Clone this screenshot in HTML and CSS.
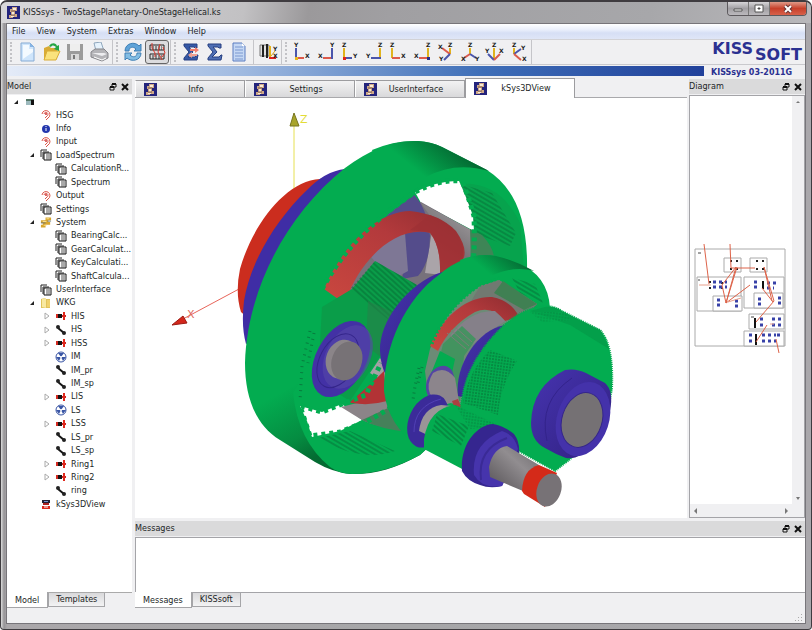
FILE: index.html
```html
<!DOCTYPE html>
<html lang="en">
<head>
<meta charset="utf-8">
<title>KISSsys - TwoStagePlanetary-OneStageHelical.ks</title>
<link rel="stylesheet" href="styles.css">
</head>
<body>
<svg class="defs" aria-hidden="true">
  <symbol id="app" viewBox="0 0 13 13"><rect width="13" height="13" fill="#24247c"/><path d="M5 1h5v4H8v3h2v3H6v1H2V9h2V6H3V3h2z" fill="#cfa987"/><path d="M6 2h3v2H6zM5 6h2v3H5zM4 10h3v1H4z" fill="#f8ebd8"/><path d="M4 5h4M4 9h4" stroke="#7a5a4c"/></symbol>
  <symbol id="copy" viewBox="0 0 12 12"><path d="M1 8V1h6M3 10V3h6" fill="none" stroke="#222"/><path d="M4 4h7v7H4z" fill="#fff" stroke="#111"/><path d="M6 6h4M6 8h4M6 10h4" stroke="#555"/></symbol>
  <symbol id="ear" viewBox="0 0 12 12"><g fill="none" stroke="#dc5548"><path d="M2 5a4 4 0 1 1 6 4L6 11"/><path d="M4 5a2 2 0 1 1 3 2L5 9"/></g><circle cx="6" cy="5" r="1" fill="#c33"/></symbol>
  <symbol id="info" viewBox="0 0 12 12"><circle cx="6" cy="6" r="4" fill="#2337ad"/><path d="M6 5v3M6 3v1" stroke="#fff"/></symbol>
  <symbol id="shaft" viewBox="0 0 12 12"><path d="M1 6h10" stroke="#c22" stroke-width="2"/><path d="M1 4h2v4H1z" fill="#d52a20"/><path d="M3 4h4v4H3z" fill="#111"/><path d="M8 2h2v8H8z" fill="#e0291c"/></symbol>
  <symbol id="link" viewBox="0 0 12 12"><path d="M3 4l6 5" stroke="#151515" stroke-width="2"/><circle cx="3" cy="3" r="2" fill="#222"/><circle cx="9" cy="9" r="2" fill="#222"/></symbol>
  <symbol id="wheel" viewBox="0 0 12 12"><circle cx="6" cy="6" r="5" fill="#fff" stroke="#3955a5"/><path d="M6 6L3 2h6zM6 6l5 0-3 4zM6 6L1 6l3 4z" fill="#3955a5"/><circle cx="6" cy="6" r="1" fill="#fff"/></symbol>
  <symbol id="gears" viewBox="0 0 13 12"><path d="M6 1h6v3H9v2h2v3H6v3H1V9h2V7H1V4h5z" fill="#d7a52e"/><path d="M7 2h3v1H7zM3 5h4v1H3zM4 9h3v1H4z" fill="#f7df8b"/><path d="M1 7h5M8 5h4" stroke="#6a777c"/></symbol>
  <symbol id="folder" viewBox="0 0 12 12"><path d="M1 2l4-1 1 1h4v9H1z" fill="#e0c35c"/><path d="M2 2l4-1v10l-4-1z" fill="#f8e9a2"/><path d="M7 3h3v7H7z" fill="#f0d16c"/></symbol>
  <symbol id="view" viewBox="0 0 12 12"><path d="M2 2h8v3H2z" fill="#223"/><path d="M4 3h4v1H4z" fill="#7790d0"/><path d="M3 5h6v2H3z" fill="#a22"/><path d="M2 8h8v3H2z" fill="#db2a1e"/><path d="M4 9h4" stroke="#fff"/></symbol>
  <symbol id="root" viewBox="0 0 12 12"><path d="M2 3h6v6H2z" fill="#9db9bd"/><path d="M2 3h8v2H2z" fill="#576"/><path d="M7 4h3v5H7z" fill="#111"/></symbol>
  <symbol id="open" viewBox="0 0 8 8"><path d="M6 2v4H2z" fill="#222"/></symbol>
  <symbol id="closed" viewBox="0 0 8 8"><path d="M2 1l4 3-4 3z" fill="#fff" stroke="#aaa"/></symbol>
  <symbol id="float" viewBox="0 0 8 8"><path d="M3 1h4v3H3zM1 4h4v3H1z" fill="#e6e6e6" stroke="#111"/><path d="M3 1h4M1 4h4" stroke="#111" stroke-width="2"/></symbol>
  <symbol id="close" viewBox="0 0 8 8"><path d="M1 1l6 6M7 1L1 7" stroke="#111" stroke-width="2"/></symbol>
</svg>

<div class="window">
  <header class="titlebar">
    <svg class="i13"><use href="#app"/></svg>
    <h1>KISSsys - TwoStagePlanetary-OneStageHelical.ks</h1>
    <div class="winbtns">
      <button aria-label="Minimize"><svg viewBox="0 0 12 10"><path d="M2 5h8v2H2z" fill="#fff" stroke="#555"/></svg></button>
      <button aria-label="Maximize"><svg viewBox="0 0 12 10"><path d="M2 1h8v7H2z" fill="#fff" stroke="#555"/><path d="M5 4h2v1H5z" stroke="#555"/></svg></button>
      <button class="x" aria-label="Close"><svg viewBox="0 0 12 10"><path d="M3 2l6 6M9 2L3 8" stroke="#633" stroke-width="4"/><path d="M3 2l6 6M9 2L3 8" stroke="#fff" stroke-width="2"/></svg></button>
    </div>
  </header>

  <div class="client">
    <nav class="menu">
      <button>File</button><button>View</button><button>System</button><button>Extras</button><button>Window</button><button>Help</button>
    </nav>

    <div class="top">
      <div class="toolbar">
        <div class="group">
          <button aria-label="New"><svg viewBox="0 0 20 20"><path d="M4 1h9l4 4v14H4z" fill="#cfe5fb" stroke="#86abd4"/><path d="M6 3h6v4h4v3L6 17z" fill="#f4faff"/><path d="M13 1v4h4z" fill="#86b4e4"/></svg></button>
          <button aria-label="Open"><svg viewBox="0 0 20 20"><path d="M3 6l5-2 2 2h6v11H3z" fill="#d9ac35"/><path d="M3 18L6 9h13l-4 9z" fill="#fae27c" stroke="#d9ac35"/><path d="M8 4c3-4 7-3 8 0l2-1v6l-5-2 2-2c-2-2-4-2-5 0z" fill="#27a645"/></svg></button>
          <button aria-label="Save"><svg viewBox="0 0 20 20"><path d="M2 2h16v16H2z" fill="#9b9b9b"/><path d="M5 2h10v7H5z" fill="#eee"/><path d="M6 12h8v6H6z" fill="#d8d8d8"/><path d="M8 13h2v4H8z" fill="#777"/></svg></button>
          <button aria-label="Print"><svg viewBox="0 0 20 20"><path d="M5 1l7-1 3 9H7z" fill="#e6f2fc" stroke="#8fa7bd"/><path d="M2 10l4-3h9l4 4v5l-6 3-11-4z" fill="#b4b4b8" stroke="#85858a"/><path d="M3 11h12l3 1-5 2z" fill="#ededf0"/><path d="M5 15l8 3 4-2" stroke="#fff" fill="none"/></svg></button>
        </div>
        <div class="group">
          <button aria-label="Refresh"><svg viewBox="0 0 20 20"><path d="M2 9c0-8 10-10 14-5l2-2v7h-7l2-2c-3-3-7-2-7 2z" fill="#5fa3d8" stroke="#3f7fb4"/><path d="M18 11c0 8-10 9-14 5l-2 2v-7h7l-2 2c3 3 7 2 7-2z" fill="#82bde4" stroke="#3f7fb4"/></svg></button>
          <button class="on" aria-label="Diagram" aria-pressed="true"><svg viewBox="0 0 20 20"><path d="M3 3h14v5H3zM3 12h14v5H3z" fill="#ddd" stroke="#222"/><path d="M5 5h10M5 7h10M5 14h10M5 16h10" stroke="#333" stroke-dasharray="2 1"/><path d="M5 1v5l3 5v4M13 2l-2 8 4 8M16 5l2 6-3 4" stroke="#d8392e" fill="none"/></svg></button>
        </div>
        <div class="group">
          <button aria-label="Calculate"><svg viewBox="0 0 20 20"><path d="M3 2h13v4h-2l-1-1H8l4 5-5 5h7l2-2h1l-1 5H3v-2l5-6-5-6z" fill="#3558a6" stroke="#263f80"/><path d="M9 7h5V5l4 3-4 3V9H9z" fill="#f07c6c"/><path d="M16 12h-5v-2l-4 3 4 3v-2h5z" fill="#f0a090"/></svg></button>
          <button aria-label="Sum"><svg viewBox="0 0 20 20"><path d="M3 2h13v4h-2l-1-1H8l4 5-5 5h7l2-2h1l-1 5H3v-2l5-6-5-6z" fill="#4f6fb4" stroke="#263f80"/></svg></button>
          <button aria-label="Report"><svg viewBox="0 0 20 20"><path d="M4 1h9l3 3v15H4z" fill="#c5d8f4" stroke="#5a7cc0"/><path d="M6 5h8M6 8h8M6 11h8M6 14h8M6 17h8" stroke="#7a98d0"/><path d="M13 1v3h3z" fill="#fff"/></svg></button>
          <i class="sep"></i>
          <button aria-label="3D view"><svg viewBox="0 0 20 20"><path d="M2 3h9v11H2z" fill="#e2e2e2" stroke="#777"/><path d="M5 3v12M9 2v14" stroke="#222" stroke-width="2"/><path d="M12 4v11" stroke="#e4b21c" stroke-width="2"/><path d="M11 16h7" stroke="#d22" stroke-width="2"/><path d="M13 14l4-5" stroke="#d9a81f"/><text x="15" y="9">Y</text><text x="15" y="16">X</text></svg></button>
        </div>
        <div class="group axes">
          <button aria-label="View XY"><svg viewBox="0 0 20 20"><path d="M4 6v11" class="b"/><path d="M4 16h8" class="r"/><path d="M3 15h3v3H3z" class="fy"/><text x="2" y="5">Y</text><text x="13" y="16">X</text></svg></button>
          <button aria-label="View YX"><svg viewBox="0 0 20 20"><path d="M16 6v11" class="b"/><path d="M7 16h8" class="r"/><text x="14" y="5">Y</text><text x="2" y="16">X</text></svg></button>
          <button aria-label="View ZY"><svg viewBox="0 0 20 20"><path d="M4 6v10" class="y"/><path d="M4 16h8" class="b"/><path d="M3 15h3v3H3z" class="fr"/><text x="2" y="5">Z</text><text x="13" y="16">Y</text></svg></button>
          <button aria-label="View YZ"><svg viewBox="0 0 20 20"><path d="M16 6v10" class="y"/><path d="M7 16h10" class="b"/><text x="14" y="5">Z</text><text x="2" y="16">Y</text></svg></button>
          <button aria-label="View ZX"><svg viewBox="0 0 20 20"><path d="M4 6v10" class="y"/><path d="M4 16h8" class="r"/><text x="2" y="5">Z</text><text x="13" y="16">X</text></svg></button>
          <button aria-label="View XZ"><svg viewBox="0 0 20 20"><path d="M16 6v10" class="y"/><path d="M7 16h8" class="r"/><path d="M15 15h3v3h-3z" class="fb"/><text x="14" y="5">Z</text><text x="2" y="16">X</text></svg></button>
          <button aria-label="Isometric 1"><svg viewBox="0 0 20 20"><path d="M14 6v6" class="y"/><path d="M14 12L6 6" class="r"/><path d="M14 12l-6 6" class="b"/><text x="12" y="5">Z</text><text x="2" y="7">X</text><text x="3" y="19">Y</text></svg></button>
          <button aria-label="Isometric 2"><svg viewBox="0 0 20 20"><path d="M10 6v6" class="y"/><path d="M10 12l-6 4" class="r"/><path d="M10 12l6 4" class="b"/><text x="8" y="5">Z</text><text x="1" y="19">X</text><text x="15" y="19">Y</text></svg></button>
          <button aria-label="Isometric 3"><svg viewBox="0 0 20 20"><path d="M10 6v12" class="y"/><path d="M10 18l-6-6" class="b"/><path d="M10 18l6-6" class="r"/><text x="8" y="5">Z</text><text x="1" y="11">Y</text><text x="15" y="11">X</text></svg></button>
          <button aria-label="Isometric 4"><svg viewBox="0 0 20 20"><path d="M6 6v6" class="y"/><path d="M6 12l7-5" class="b"/><path d="M6 12l7 6" class="r"/><text x="4" y="5">Z</text><text x="13" y="8">Y</text><text x="14" y="19">X</text></svg></button>
        </div>
      </div>
      <div class="logo"><b>KISS</b><b class="low">SOFT</b></div>
    </div>
    <div class="strip"><i></i><span>KISSsys 03-2011G</span></div>

    <main>
      <aside class="left">
        <div class="dock"><h2>Model</h2><button aria-label="Float"><svg><use href="#float"/></svg></button><button aria-label="Close"><svg><use href="#close"/></svg></button></div>
        <div class="treebox">
        <ul class="tree">
          <li class="l0"><svg class="tw"><use href="#open"/></svg><svg><use href="#root"/></svg></li>
          <li class="l1"><i class="tw"></i><svg><use href="#ear"/></svg><span>HSG</span></li>
          <li class="l1"><i class="tw"></i><svg><use href="#info"/></svg><span>Info</span></li>
          <li class="l1"><i class="tw"></i><svg><use href="#ear"/></svg><span>Input</span></li>
          <li class="l1"><svg class="tw"><use href="#open"/></svg><svg><use href="#copy"/></svg><span>LoadSpectrum</span></li>
          <li class="l2"><i class="tw"></i><svg><use href="#copy"/></svg><span>CalculationR...</span></li>
          <li class="l2"><i class="tw"></i><svg><use href="#copy"/></svg><span>Spectrum</span></li>
          <li class="l1"><i class="tw"></i><svg><use href="#ear"/></svg><span>Output</span></li>
          <li class="l1"><i class="tw"></i><svg><use href="#copy"/></svg><span>Settings</span></li>
          <li class="l1"><svg class="tw"><use href="#open"/></svg><svg><use href="#gears"/></svg><span>System</span></li>
          <li class="l2"><i class="tw"></i><svg><use href="#copy"/></svg><span>BearingCalc...</span></li>
          <li class="l2"><i class="tw"></i><svg><use href="#copy"/></svg><span>GearCalculat...</span></li>
          <li class="l2"><i class="tw"></i><svg><use href="#copy"/></svg><span>KeyCalculati...</span></li>
          <li class="l2"><i class="tw"></i><svg><use href="#copy"/></svg><span>ShaftCalcula...</span></li>
          <li class="l1"><i class="tw"></i><svg><use href="#copy"/></svg><span>UserInterface</span></li>
          <li class="l1"><svg class="tw"><use href="#open"/></svg><svg><use href="#folder"/></svg><span>WKG</span></li>
          <li class="l2"><svg class="tw"><use href="#closed"/></svg><svg><use href="#shaft"/></svg><span>HIS</span></li>
          <li class="l2"><svg class="tw"><use href="#closed"/></svg><svg><use href="#link"/></svg><span>HS</span></li>
          <li class="l2"><svg class="tw"><use href="#closed"/></svg><svg><use href="#shaft"/></svg><span>HSS</span></li>
          <li class="l2"><i class="tw"></i><svg><use href="#wheel"/></svg><span>IM</span></li>
          <li class="l2"><i class="tw"></i><svg><use href="#link"/></svg><span>IM_pr</span></li>
          <li class="l2"><i class="tw"></i><svg><use href="#link"/></svg><span>IM_sp</span></li>
          <li class="l2"><svg class="tw"><use href="#closed"/></svg><svg><use href="#shaft"/></svg><span>LIS</span></li>
          <li class="l2"><i class="tw"></i><svg><use href="#wheel"/></svg><span>LS</span></li>
          <li class="l2"><svg class="tw"><use href="#closed"/></svg><svg><use href="#shaft"/></svg><span>LSS</span></li>
          <li class="l2"><i class="tw"></i><svg><use href="#link"/></svg><span>LS_pr</span></li>
          <li class="l2"><i class="tw"></i><svg><use href="#link"/></svg><span>LS_sp</span></li>
          <li class="l2"><svg class="tw"><use href="#closed"/></svg><svg><use href="#shaft"/></svg><span>Ring1</span></li>
          <li class="l2"><svg class="tw"><use href="#closed"/></svg><svg><use href="#shaft"/></svg><span>Ring2</span></li>
          <li class="l2"><i class="tw"></i><svg><use href="#link"/></svg><span>ring</span></li>
          <li class="l1"><i class="tw"></i><svg><use href="#view"/></svg><span>kSys3DView</span></li>
        </ul>
        </div>
        <div class="btabs"><button class="active">Model</button><button>Templates</button></div>
      </aside>

      <div class="right">
        <div class="work">
          <section class="center">
            <div class="tabs">
              <button><svg class="i13"><use href="#app"/></svg><span>Info</span></button>
              <button><svg class="i13"><use href="#app"/></svg><span>Settings</span></button>
              <button><svg class="i13"><use href="#app"/></svg><span>UserInterface</span></button>
              <button class="active"><svg class="i13"><use href="#app"/></svg><span>kSys3DView</span></button>
            </div>
            <div class="canvas">
            <svg viewBox="135 97 552 420" role="img" aria-label="Two-stage planetary gearbox">
              <defs>
                <linearGradient id="ringG" gradientUnits="userSpaceOnUse" x1="300" y1="465" x2="265" y2="400"><stop offset="0" stop-color="#046b32"/><stop offset=".35" stop-color="#058c41"/><stop offset="1" stop-color="#03ac50"/></linearGradient>
                <linearGradient id="topG" gradientUnits="userSpaceOnUse" x1="430" y1="180" x2="462" y2="140"><stop offset="0" stop-color="#03ac50"/><stop offset="1" stop-color="#045b2c"/></linearGradient>
                <linearGradient id="top2" gradientUnits="userSpaceOnUse" x1="498" y1="280" x2="520" y2="254"><stop offset="0" stop-color="#03ac50"/><stop offset="1" stop-color="#056531"/></linearGradient>
                <linearGradient id="redG" x1="0" y1="1" x2="1" y2="0"><stop offset="0" stop-color="#c9473f"/><stop offset=".6" stop-color="#b33a3c"/><stop offset="1" stop-color="#8e2c30"/></linearGradient>
                <linearGradient id="blueG" x1="0" y1="0" x2="1" y2="1"><stop offset="0" stop-color="#4634b0"/><stop offset="1" stop-color="#30207f"/></linearGradient>
                <linearGradient id="greyG" x1="1" y1="0" x2="0" y2="1"><stop offset="0" stop-color="#6b686b"/><stop offset=".4" stop-color="#918d90"/><stop offset="1" stop-color="#545054"/></linearGradient>
                <pattern id="mesh" width="3" height="3" patternUnits="userSpaceOnUse" patternTransform="rotate(8)"><rect width="3" height="3" fill="#03ac50"/><path d="M0 1h2" stroke="#066a34"/></pattern>
                <pattern id="ribs" width="20" height="4" patternUnits="userSpaceOnUse" patternTransform="rotate(30)"><path d="M0 1h20" stroke="#067038"/></pattern>
                <pattern id="ribs2" width="20" height="4" patternUnits="userSpaceOnUse" patternTransform="rotate(42)"><path d="M0 1h20" stroke="#056b34"/></pattern>
                <clipPath id="hole"><path d="M324 288C345 250 370 225 417 192Q440 181 459 182Q464 195 470 215Q472 230 470 262L500 300 384 375Q392 420 362 419L340 406 350 300z"/></clipPath>
              </defs>
              <!-- axes -->
              <path d="M294 122v66" stroke="#e6e052" fill="none"/><path d="M294 112l5 13h-9z" fill="#a8a42a" stroke="#77751f"/>
              <text x="300" y="122" class="ax" fill="#e3dc38">Z</text>
              <path d="M183 318l56-30" stroke="#e8655a" fill="none"/><path d="M172 324l11-9 4 7z" fill="#d3271c" stroke="#9c1a12"/>
              <text x="187" y="317" class="ax" fill="#e06a5f">X</text>
              <!-- input discs behind the first ring -->
              <path d="M320 178C285 180 252 225 240 268Q235 292 241 311L262 330 345 168z" fill="#cb2d1e"/>
              <path d="M345 168Q325 170 306 190C275 220 250 262 244 300Q241 325 246 343L270 330 360 180z" fill="#3f2da5"/>
              <!-- first ring -->
              <path d="M345 167C370 148 395 139 418 140Q432 141 442 146L487 169C514 186 528 218 527 268L500 380 420 454C395 468 372 474 350 473Q332 471 315 461L280 439C255 424 245 395 245 362C247 290 285 215 345 167z" fill="url(#ringG)"/>
              <path d="M372 149Q395 139 418 140Q432 141 442 146L489 170Q455 160 426 176L390 200z" fill="url(#topG)"/>
              <path d="M293 392Q298 440 330 466Q340 473 352 473Q385 473 420 454L500 380 400 350 320 340z" fill="#03ac50"/>
              <path d="M460 183Q500 180 520 222L524 270 474 256 470 215z" fill="#07a34d"/>
              <path d="M460 183L492 192 516 232 510 245 472 232z" fill="url(#ribs)"/>
              <!-- openings -->
              <path d="M415 191Q440 179 459 180Q466 195 473 215L474 230 421 202z" fill="#fff"/>
              <path d="M300 405L322 411 342 403 362 419 340 430 312 436 307 420z" fill="#fff"/>
              <!-- interior -->
              <g clip-path="url(#hole)">
                <path d="M324 288L384 210 421 201 471 229 495 260 440 280 384 300 345 310z" fill="#77717b"/>
                <path d="M421 202L471 229 495 260 465 258 430 215z" fill="url(#greyG)"/>
                <path d="M432 230L446 236 442 274 425 272z" fill="#aaa4a9"/>
                <path d="M372 224L412 192Q427 205 430 235Q430 262 418 275L402 278Q410 240 396 215z" fill="#544c8b"/>
                <path d="M365 248L405 232 408 270 390 280z" fill="#7e7795"/>
              </g>
              <path d="M470 228L482 234Q493 246 494 256L471 258z" fill="#3e8556"/>
              <path d="M324 288C342 246 375 211 410 210Q440 213 456 230Q467 246 464 256L458 272 440 272Q441 246 430 232C395 224 360 260 347 297L338 298z" fill="url(#redG)"/>
              <path d="M430 214Q455 224 462 244Q465 258 458 272L440 272Q441 246 430 231L410 229z" fill="#9d3034" opacity=".7"/>
              <!-- planet gear -->
              <path d="M352 288L375 260 417 284 398 315 382 352 350 400 318 380 322 306z" fill="#0a9d49"/>
              <path d="M375 260L417 284 390 320 350 288z" fill="url(#ribs2)"/>
              <path d="M368 300L395 312 381 356 366 345z" fill="#27804a" opacity=".6"/>
              <path d="M370 372L380 357 388 368 386 382z" fill="#a5a0a3"/>
              <path d="M341 406L365 400 392 384 405 426Q380 428 362 419z" fill="#8b8488"/>
              <path d="M349 402Q370 384 384 370L387 400Q370 405 352 402z" fill="#b23335"/>
              <path d="M362 419L388 407 408 431Q380 428 362 419z" fill="#46805a"/>
              <!-- tooth edges -->
              <g fill="none" stroke="#03ac50" stroke-width="5" stroke-dasharray="4 4">
                <path d="M322 288C345 247 370 222 415 191Q440 178 460 180"/><path d="M463 182Q468 195 474 215Q475 245 473 262"/>
                <path d="M301 405L322 411 342 403 366 394 381 362"/><path d="M301 408L310 435 340 431 370 419 390 407"/>
              </g>
              <path d="M318 437L350 430 395 450Q360 462 318 437z" fill="url(#ribs)"/>
              <path d="M310 330L302 365 300 400M314 332l-6 30" stroke="#0a6a37" stroke-dasharray="1 5" stroke-width="3" fill="none" opacity=".7"/>
              <!-- planet pin -->
              <g transform="rotate(28 341 358)"><ellipse cx="341" cy="358" rx="25" ry="41" fill="#4331a5"/><ellipse cx="346" cy="353" rx="22" ry="34" fill="#5747a8" opacity=".6"/><ellipse cx="339" cy="361" rx="18" ry="29" fill="none" stroke="#34258a"/></g>
              <g transform="rotate(20 344 359)"><ellipse cx="342" cy="359" rx="16" ry="20" fill="#8b8589"/><ellipse cx="347" cy="359" rx="15" ry="20" fill="#777276"/></g>
              <!-- second stage bearing and ring -->
              <path d="M442 271C408 282 379 320 380 350Q381 366 386 374L412 330 450 275z" fill="url(#blueG)"/>
              <path d="M440 273Q462 254 489 254Q505 255 518 262Q548 274 550 307L530 380 450 450 420 447Q388 425 384 390C384 345 405 298 440 273z" fill="#03ac50"/>
              <path d="M460 259Q478 252 496 255Q514 259 534 270Q515 265 495 273L470 286z" fill="url(#top2)"/>
              <path d="M512 277L535 283 543 302 520 292z" fill="url(#ribs)"/>
              <path d="M430 348Q445 308 480 285L499 279 537 303 500 330 470 365 460 405 428 395 425 370z" fill="#6c8b76"/>
              <path d="M480 285L499 279 537 303 525 316 497 303 470 302z" fill="#717971"/>
              <path d="M503 280L537 303 524 309 494 292z" fill="#408053"/>
              <path d="M430 345C445 311 470 295 492 296Q512 300 519 316L505 320Q492 304 475 311Q450 325 438 350z" fill="url(#redG)"/>
              <path d="M450 335Q470 309 495 310L505 320 470 345z" fill="#858089"/>
              <path d="M443 343L462 325 476 338 464 355 460 400 430 396z" fill="#3c945c" opacity=".85"/>
              <path d="M447 332L466 348M451 329L469 345M455 326L472 341" stroke="#797e77"/>
              <path d="M440 350L455 358 452 372 430 375z" fill="#03ac50"/>
              <path d="M432 343Q445 308 480 284L500 277" fill="none" stroke="#03ac50" stroke-width="3" stroke-dasharray="2 2"/>
              <path d="M419 367l-4 18-2 14M422 366l-4 16" stroke="#0a6a37" stroke-dasharray="1 4" stroke-width="3" fill="none" opacity=".7"/>
              <ellipse cx="440" cy="382" rx="13" ry="18" fill="#5544a4" transform="rotate(25 440 382)"/><path d="M433 372Q445 364 455 377L459 400 447 403 430 393Q426 383 433 372z" fill="#8c858c"/><path d="M452 400l6-2 4 10-8-3z" fill="#a94040"/>
              <!-- large helical gear -->
              <path d="M505 324C478 328 454 365 458 395L475 400 510 335z" fill="url(#blueG)"/>
              <path d="M461 408Q463 365 500 328Q522 306 545 305Q555 305 562 310L600 329Q614 343 612 388L604 430 568 460 555 470 500 440z" fill="#03ac50" stroke="#03ac50" stroke-width="2" stroke-dasharray="1 1"/>
              <path d="M545 306Q556 305 562 310L601 329 609 348 570 324 530 310z" fill="#048b40" opacity=".4"/>
              <path d="M490 349Q503 354 517 360Q500 385 498 414L463 402Q468 370 490 349z" fill="url(#mesh)"/>
              <path d="M530 311h34l8 8-30 2z" fill="url(#mesh)" opacity=".4"/>
              <path d="M531 422Q532 385 565 369Q576 367 586 372L605 382Q614 390 610 410C604 440 582 460 566 457Q555 453 545 447Q531 440 531 422z" fill="url(#blueG)"/>
              <ellipse cx="583" cy="418" rx="26" ry="38" fill="#4432aa" transform="rotate(18 583 418)"/><path d="M547 440Q538 400 572 377" stroke="#33238b" fill="none"/>
              <ellipse cx="582" cy="419" rx="20" ry="28" fill="#757174" stroke="#35268a" transform="rotate(18 582 419)"/>
              <!-- pinion shaft -->
              <ellipse cx="428" cy="420" rx="19" ry="28" fill="#3b2b99" transform="rotate(25 428 420)"/><path d="M419 430Q422 407 441 404L452 405 436 438z" fill="#9a9597"/><path d="M414 431Q414 405 441 398" stroke="#5140b5" fill="none"/>
              <path d="M424 438Q429 407 455 404L505 427 485 480 424 448z" fill="#03ac50"/>
              <path d="M437 413L469 425 461 445 432 430z" fill="url(#ribs2)"/><path d="M455 404L500 425 470 428z" fill="url(#mesh)" opacity=".6"/>
              <path d="M462 470C460 443 477 424 493 423Q504 425 514 433Q520 441 519 452L502 485Q490 488 480 484Q467 480 462 470z" fill="#35268f"/>
              <path d="M474 474Q471 443 502 430Q515 434 518 448L502 485Q482 488 474 474z" fill="#4634ac"/><path d="M481 479Q477 448 507 437" stroke="#3a2a96" fill="none" stroke-width="2"/>
              <path d="M489 466Q493 447 507 445L539 464 523 490 490 476z" fill="url(#greyG)"/>
              <path d="M522 490Q523 468 539 464L557 472 545 506 524 493z" fill="#d42a19"/>
              <ellipse cx="549" cy="489" rx="12" ry="17" fill="#777276" transform="rotate(20 549 489)"/>
            </svg>
            </div>
          </section>
          <aside class="diagram">
            <div class="dock"><h2>Diagram</h2><button aria-label="Float"><svg><use href="#float"/></svg></button><button aria-label="Close"><svg><use href="#close"/></svg></button></div>
            <div class="scroll">
              <div class="paper">
                <svg viewBox="0 0 96 114" role="img" aria-label="Model diagram">
                  <g fill="#fff" stroke="#aaa"><path d="M2 6h90v97H2z"/><path d="M31 15h17v14H31zM57 15h17v14H57z"/><path d="M4 34h44v34H4zM51 34h40v31H51z"/><path d="M20 53h29v15H20zM61 50h29v15H61z"/><path d="M56 71h35v15H56zM51 88h40v15H51z"/></g>
                  <g stroke="#222" stroke-width="2" stroke-dasharray="2 4"><path d="M37 18h9M37 26h9M63 18h9M63 26h9M16 39h5M16 45h5M28 40h4M28 45h4"/></g>
                  <path d="M62 75v10M63 91v11M70 38v8" stroke="#111" stroke-width="2"/>
                  <g stroke="#3842a8" stroke-width="3" stroke-dasharray="3 3"><path d="M20 39h14M20 44h14M24 57h5M24 62h5M42 58h5M42 63h5M61 39h5M61 44h5M74 40h9M74 45h7M65 56h5M65 61h5M85 55h4M85 60h4M67 76h5M67 82h5M79 76h11M79 82h11M56 92h3M56 98h3M69 92h14M69 98h14M84 92h4"/></g>
                  <path d="M5 10h3M5 37h2M58 74h3" stroke="#444"/>
                  <path d="M11 1l5 40M37 1l1 24h24M43 24L29 42l4 18M43 24L33 60M44 24L33 60M33 60l24-18M71 24l8 34M71 24l10 34M69 45l11 14M81 58L63 79M74 82L63 99M83 96l3 14" fill="none" stroke="#dd6349"/>
                  <path d="M35 59l13-4M77 81l4 0M6 42l12 0" stroke="#e9a08c"/>
                </svg>
              </div>
              <div class="vbar"><svg viewBox="0 0 8 8"><path d="M2 5l2-2 2 2z"/></svg><svg viewBox="0 0 8 8"><path d="M2 3h4L4 6z"/></svg></div>
              <div class="hbar"><svg viewBox="0 0 8 8"><path d="M5 1v6L2 4z"/></svg><svg viewBox="0 0 8 8"><path d="M3 1v6l3-3z"/></svg></div>
            </div>
          </aside>
        </div>
        <section class="messages">
          <div class="dock"><h2>Messages</h2><button aria-label="Float"><svg><use href="#float"/></svg></button><button aria-label="Close"><svg><use href="#close"/></svg></button></div>
          <div class="log"></div>
          <div class="btabs"><button class="active">Messages</button><button>KISSsoft</button></div>
        </section>
      </div>
    </main>
    <footer><svg viewBox="0 0 8 8"><path d="M6 1h1v1H6zM3 4h1v1H3zM6 4h1v1H6zM0 7h1v1H0zM3 7h1v1H3zM6 7h1v1H6z" fill="#aaa"/></svg></footer>
  </div>
</div>
</body>
</html>
```

FILE: styles.css
```css
* { box-sizing: border-box; }
body {
  margin: 0;
  background: #fff;
  color: #221f26;
  font: 9px/13px "DejaVu Sans Condensed", "DejaVu Sans", sans-serif;
}
button {
  margin: 0;
  padding: 0;
  border: 0;
  background: none;
  color: inherit;
  font: inherit;
}
h1, h2 { margin: 0; font-size: 9px; font-weight: 400; }
svg { display: block; flex: none; }
.defs { position: absolute; width: 0; height: 0; }
.i13 { width: 13px; height: 13px; }

.window {
  display: flex;
  flex-direction: column;
  min-height: 100vh;
  padding: 0 5px 5px;
  border: 1px solid #3f3c40;
  border-top-width: 2px;
  border-radius: 7px 7px 4px 4px;
  background: linear-gradient(90deg, #ddd 0, #969497 3px, #aaa7aa 6px, #a6a6a8 50%, #a9a7ab);
}
.titlebar {
  display: flex;
  align-items: center;
  gap: 3px;
  height: 21px;
  margin: 0 -5px;
  padding-left: 6px;
  border-radius: 6px 6px 0 0;
  background: linear-gradient(100deg, #d9d8da 0, #c2c1c3 30%, #9b999b 38%, #a09fa2 48%, #a7a7aa 80%, #b9b8bb);
}
.titlebar h1 { flex: 1; }
.winbtns { display: flex; align-self: flex-start; margin-right: 4px; border: 1px solid #5c595d; border-top: 0; border-radius: 0 0 4px 4px; overflow: hidden; }
.winbtns button { width: 21px; height: 13px; border-right: 1px solid #777; background: linear-gradient(#d6d5d8, #a19fa3 50%, #bbb9bd); }
.winbtns .x { width: 36px; border: 0; background: linear-gradient(#e09a88, #c7402b 50%, #d8614a); }
.winbtns svg { width: 12px; height: 10px; margin: auto; }

.client { flex: 1; display: flex; flex-direction: column; border: 1px solid #77757a; background: #f0f0f2; }
.menu { display: flex; gap: 11px; height: 15px; padding-left: 5px; background: linear-gradient(#fff, #e9eefb 40%, #d6dff5 60%, #dfe6f7); }
.top { display: flex; justify-content: space-between; height: 26px; border-top: 1px solid #d2d2d6; border-bottom: 1px solid #c9c9cd; }
.toolbar { display: flex; }
.group { display: flex; align-items: center; padding: 0 1px 0 3px; border-right: 1px solid #c5c5c9; }
.group::before { content: ""; width: 3px; height: 20px; border-left: 2px dotted #c2c2c6; }
.group button { width: 24px; height: 24px; padding: 2px; }
.group svg { width: 20px; height: 20px; }
.group .on { padding: 1px; border: 1px solid #666; border-radius: 3px; background: #dcdcde; }
.group text { font: bold 6px "DejaVu Sans", sans-serif; fill: #222; }
.sep { width: 1px; height: 24px; margin: 0 2px; background: #c5c5c9; }
.b, .r, .y { fill: none; stroke-width: 2; }
.b { stroke: #4a55ac; }
.r { stroke: #dc5a4c; }
.y { stroke: #e0b31e; }
.fy { fill: #e6b81c; }
.fr { fill: #df2419; }
.fb { fill: #26308c; }
.logo { display: flex; gap: 2px; padding-right: 3px; color: #2b3191; font: 16px/16px "DejaVu Sans", sans-serif; }
.logo b { margin-top: 1px; }
.logo .low { margin-top: 7px; }
.strip { display: flex; gap: 7px; height: 14px; padding-top: 1px; overflow: hidden; }
.strip i { flex: 1; height: 10px; background: linear-gradient(90deg, #e4ebf8, #a4bde2 32%, #3f6fb8 68%, #20409a); }
.strip span { width: 94px; color: #2b3191; font: bold 8px/13px "DejaVu Sans", sans-serif; white-space: nowrap; }

main { flex: 1; display: flex; gap: 3px; }
.dock { display: flex; align-items: center; gap: 4px; height: 15px; padding-right: 3px; background: #dadadb; }
.dock h2 { flex: 1; }
.dock svg { width: 8px; height: 8px; }
.left { display: flex; flex-direction: column; width: 125px; }
.treebox { flex: 1; margin-top: 1px; background: #fff; border-bottom: 1px solid #aaa; }
.tree { display: grid; grid-auto-rows: 1fr; height: 416px; margin: 0; padding: 0; list-style: none; }
.tree li { display: flex; align-items: center; gap: 4px; white-space: nowrap; }
.tree svg { width: 12px; height: 12px; }
.tree .tw { width: 8px; height: 8px; }
.tree .l0 { padding-left: 5px; }
.tree .l1 { padding-left: 21px; }
.tree .l2 { padding-left: 36px; }
.btabs { display: flex; align-items: flex-start; height: 15px; }
.btabs button { height: 14px; padding: 0 7px; border: 1px solid #a5a5a8; border-top: 0; background: linear-gradient(#d9d9db, #f3f3f4); }
.btabs .active { height: 16px; padding: 1px 8px 0; margin-top: -1px; border-left: 0; background: #fff; }

.right { flex: 1; display: flex; flex-direction: column; gap: 3px; min-width: 0; }
.work { flex: 1; display: flex; gap: 2px; }
.center { flex: 1; display: flex; flex-direction: column; min-width: 0; }
.tabs { display: flex; align-items: flex-end; height: 19px; border-bottom: 1px solid #a9a9ac; }
.tabs button { display: flex; align-items: center; width: 110px; height: 17px; padding-left: 8px; border: 1px solid #9c9c9f; border-bottom: 0; border-left-color: #fff; background: linear-gradient(#f2f2f3, #d9d9db); }
.tabs button span { flex: 1; padding-right: 9px; text-align: center; }
.tabs .active { height: 20px; margin-bottom: -1px; border-left-color: #9c9c9f; background: #fff; }
.canvas { flex: 1; background: #fff; }
.canvas svg { width: 100%; }
.ax { font: 11px "DejaVu Sans", sans-serif; }
.diagram { display: flex; flex-direction: column; width: 116px; }
.scroll { flex: 1; display: grid; grid-template: 1fr 13px / 1fr 12px; margin-top: 1px; border: 1px solid #a4a4a8; background: #f0f0f2; }
.paper { display: flex; align-items: center; justify-content: center; background: #fff; }
.paper svg { width: 96px; height: 114px; }
.vbar, .hbar { display: flex; align-items: center; justify-content: space-between; padding: 2px; }
.vbar { flex-direction: column; }
.vbar svg, .hbar svg { width: 8px; height: 8px; fill: #777; }
.log { height: 56px; margin-top: 1px; border: 1px solid #a4a4a8; border-right: 0; background: #fff; }
footer { display: flex; justify-content: flex-end; align-items: flex-end; height: 15px; padding: 2px; }
footer svg { width: 8px; height: 8px; }
```
